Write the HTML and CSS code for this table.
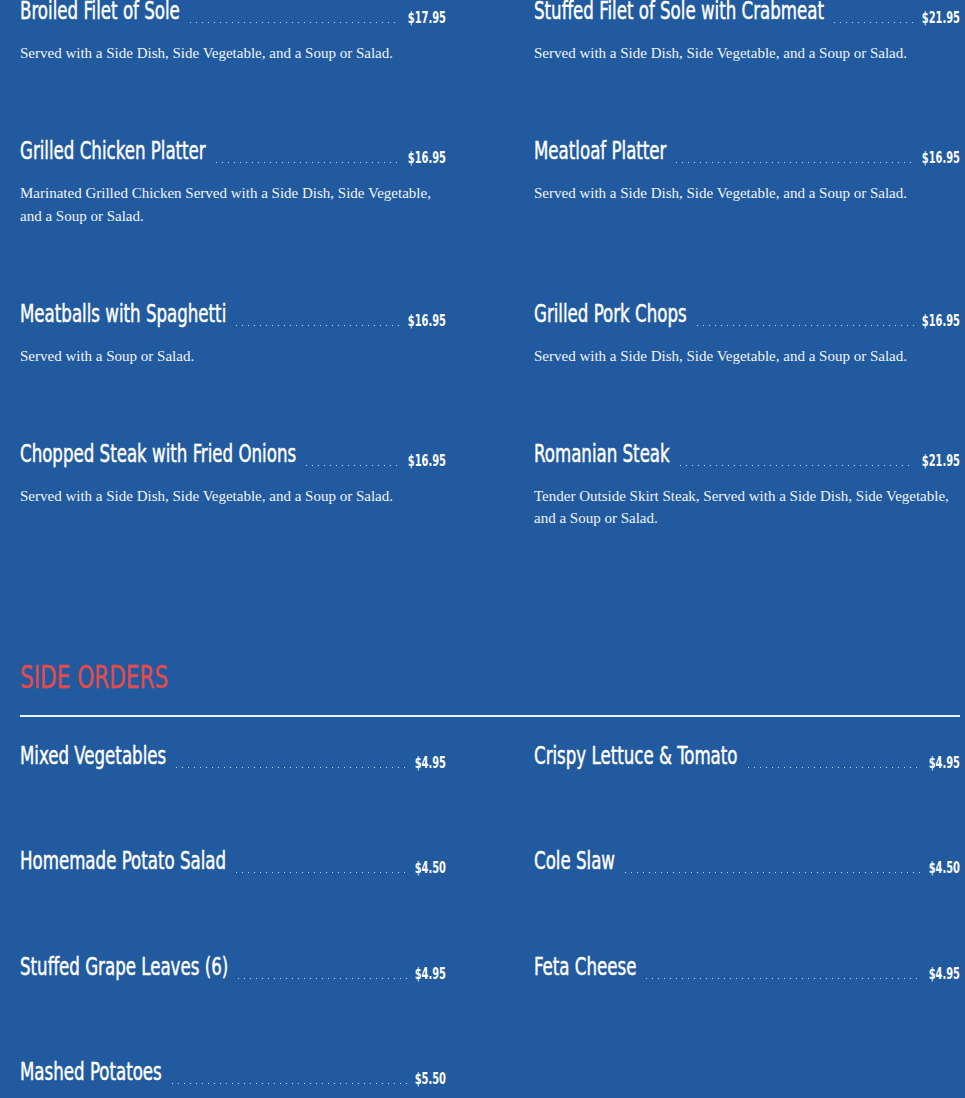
FILE: index.html
```html
<!DOCTYPE html>
<html lang="en">
<head>
<meta charset="utf-8">
<title>Menu</title>
<link rel="stylesheet" href="styles.css">
</head>
<body>
<main class="page">
  <section class="menu-grid">
    <div class="item">
      <div class="item-head"><span class="item-title">Broiled Filet of Sole</span><span class="leader"></span><span class="price">$17.95</span></div>
      <p class="desc">Served with a Side Dish, Side Vegetable, and a Soup or Salad.</p>
    </div>
    <div class="item">
      <div class="item-head"><span class="item-title">Stuffed Filet of Sole with Crabmeat</span><span class="leader"></span><span class="price">$21.95</span></div>
      <p class="desc">Served with a Side Dish, Side Vegetable, and a Soup or Salad.</p>
    </div>
    <div class="item">
      <div class="item-head"><span class="item-title">Grilled Chicken Platter</span><span class="leader"></span><span class="price">$16.95</span></div>
      <p class="desc">Marinated Grilled Chicken Served with a Side Dish, Side Vegetable, and a Soup or Salad.</p>
    </div>
    <div class="item">
      <div class="item-head"><span class="item-title">Meatloaf Platter</span><span class="leader"></span><span class="price">$16.95</span></div>
      <p class="desc">Served with a Side Dish, Side Vegetable, and a Soup or Salad.</p>
    </div>
    <div class="item">
      <div class="item-head"><span class="item-title">Meatballs with Spaghetti</span><span class="leader"></span><span class="price">$16.95</span></div>
      <p class="desc">Served with a Soup or Salad.</p>
    </div>
    <div class="item">
      <div class="item-head"><span class="item-title">Grilled Pork Chops</span><span class="leader"></span><span class="price">$16.95</span></div>
      <p class="desc">Served with a Side Dish, Side Vegetable, and a Soup or Salad.</p>
    </div>
    <div class="item">
      <div class="item-head"><span class="item-title">Chopped Steak with Fried Onions</span><span class="leader"></span><span class="price">$16.95</span></div>
      <p class="desc">Served with a Side Dish, Side Vegetable, and a Soup or Salad.</p>
    </div>
    <div class="item">
      <div class="item-head"><span class="item-title">Romanian Steak</span><span class="leader"></span><span class="price">$21.95</span></div>
      <p class="desc">Tender Outside Skirt Steak, Served with a Side Dish, Side Vegetable, and a Soup or Salad.</p>
    </div>
  </section>

  <section class="section">
    <h2 class="section-title"><span class="section-text">SIDE ORDERS</span></h2>
    <div class="section-rule"></div>
    <div class="menu-grid">
      <div class="item side-item">
        <div class="item-head"><span class="item-title">Mixed Vegetables</span><span class="leader"></span><span class="price">$4.95</span></div>
      </div>
      <div class="item side-item">
        <div class="item-head"><span class="item-title">Crispy Lettuce &amp; Tomato</span><span class="leader"></span><span class="price">$4.95</span></div>
      </div>
      <div class="item side-item">
        <div class="item-head"><span class="item-title">Homemade Potato Salad</span><span class="leader"></span><span class="price">$4.50</span></div>
      </div>
      <div class="item side-item">
        <div class="item-head"><span class="item-title">Cole Slaw</span><span class="leader"></span><span class="price">$4.50</span></div>
      </div>
      <div class="item side-item">
        <div class="item-head"><span class="item-title">Stuffed Grape Leaves (6)</span><span class="leader"></span><span class="price">$4.95</span></div>
      </div>
      <div class="item side-item">
        <div class="item-head"><span class="item-title">Feta Cheese</span><span class="leader"></span><span class="price">$4.95</span></div>
      </div>
      <div class="item side-item">
        <div class="item-head"><span class="item-title">Mashed Potatoes</span><span class="leader"></span><span class="price">$5.50</span></div>
      </div>
    </div>
  </section>
</main>
</body>
</html>
```

FILE: styles.css
```css
html, body {
  margin: 0;
  padding: 0;
  background: #215a9e;
  color: #f4f8fc;
}

.page {
  width: 940px;
  margin: -2px 0 0 20px;
}

.menu-grid {
  display: grid;
  grid-template-columns: 426px 426px;
  column-gap: 88px;
}

.item {
  padding-bottom: 73.5px;
}

.item-head {
  display: flex;
  align-items: flex-end;
  height: 30px;
}

.item-title {
  display: inline-block;
  font-family: "DejaVu Sans Condensed", "DejaVu Sans", sans-serif;
  font-weight: 400;
  font-size: 18.5px;
  line-height: 30px;
  white-space: nowrap;
  color: #ffffff;
  -webkit-text-stroke: 0.35px #ffffff;
  transform: scaleY(1.33);
  transform-origin: 50% 21.4px;
}

.leader {
  flex: 1;
  height: 1px;
  margin: 0 8px 5px 10px;
  background: repeating-linear-gradient(to right, rgba(220, 236, 255, 0.85) 0 1px, transparent 1px 6px);
}

.price {
  display: inline-block;
  margin-bottom: -1px;
  font-family: "DejaVu Sans Condensed", "DejaVu Sans", sans-serif;
  font-weight: 700;
  font-size: 11px;
  line-height: 18px;
  white-space: nowrap;
  color: #ffffff;
  transform: scaleY(1.46);
  transform-origin: 50% 12.8px;
}

.desc {
  margin: 14px 0 0;
  font-family: "Liberation Serif", "Times New Roman", serif;
  font-size: 15px;
  line-height: 22.5px;
  color: #f0f4fa;
}

.section {
  padding-top: 57px;
}

.section-title {
  margin: 0;
  font-family: "DejaVu Sans Condensed", "DejaVu Sans", sans-serif;
  font-weight: 400;
  font-size: 24px;
  line-height: 40px;
  color: #e24b4b;
}

.section-text {
  display: inline-block;
  -webkit-text-stroke: 0.3px #e24b4b;
  transform: scaleY(1.31);
  transform-origin: 50% 28.3px;
}

.section-rule {
  height: 2px;
  background: #eaf6ff;
  margin: 15px 0 25.5px;
}

.side-item {
  padding-bottom: 75.5px;
}
```
